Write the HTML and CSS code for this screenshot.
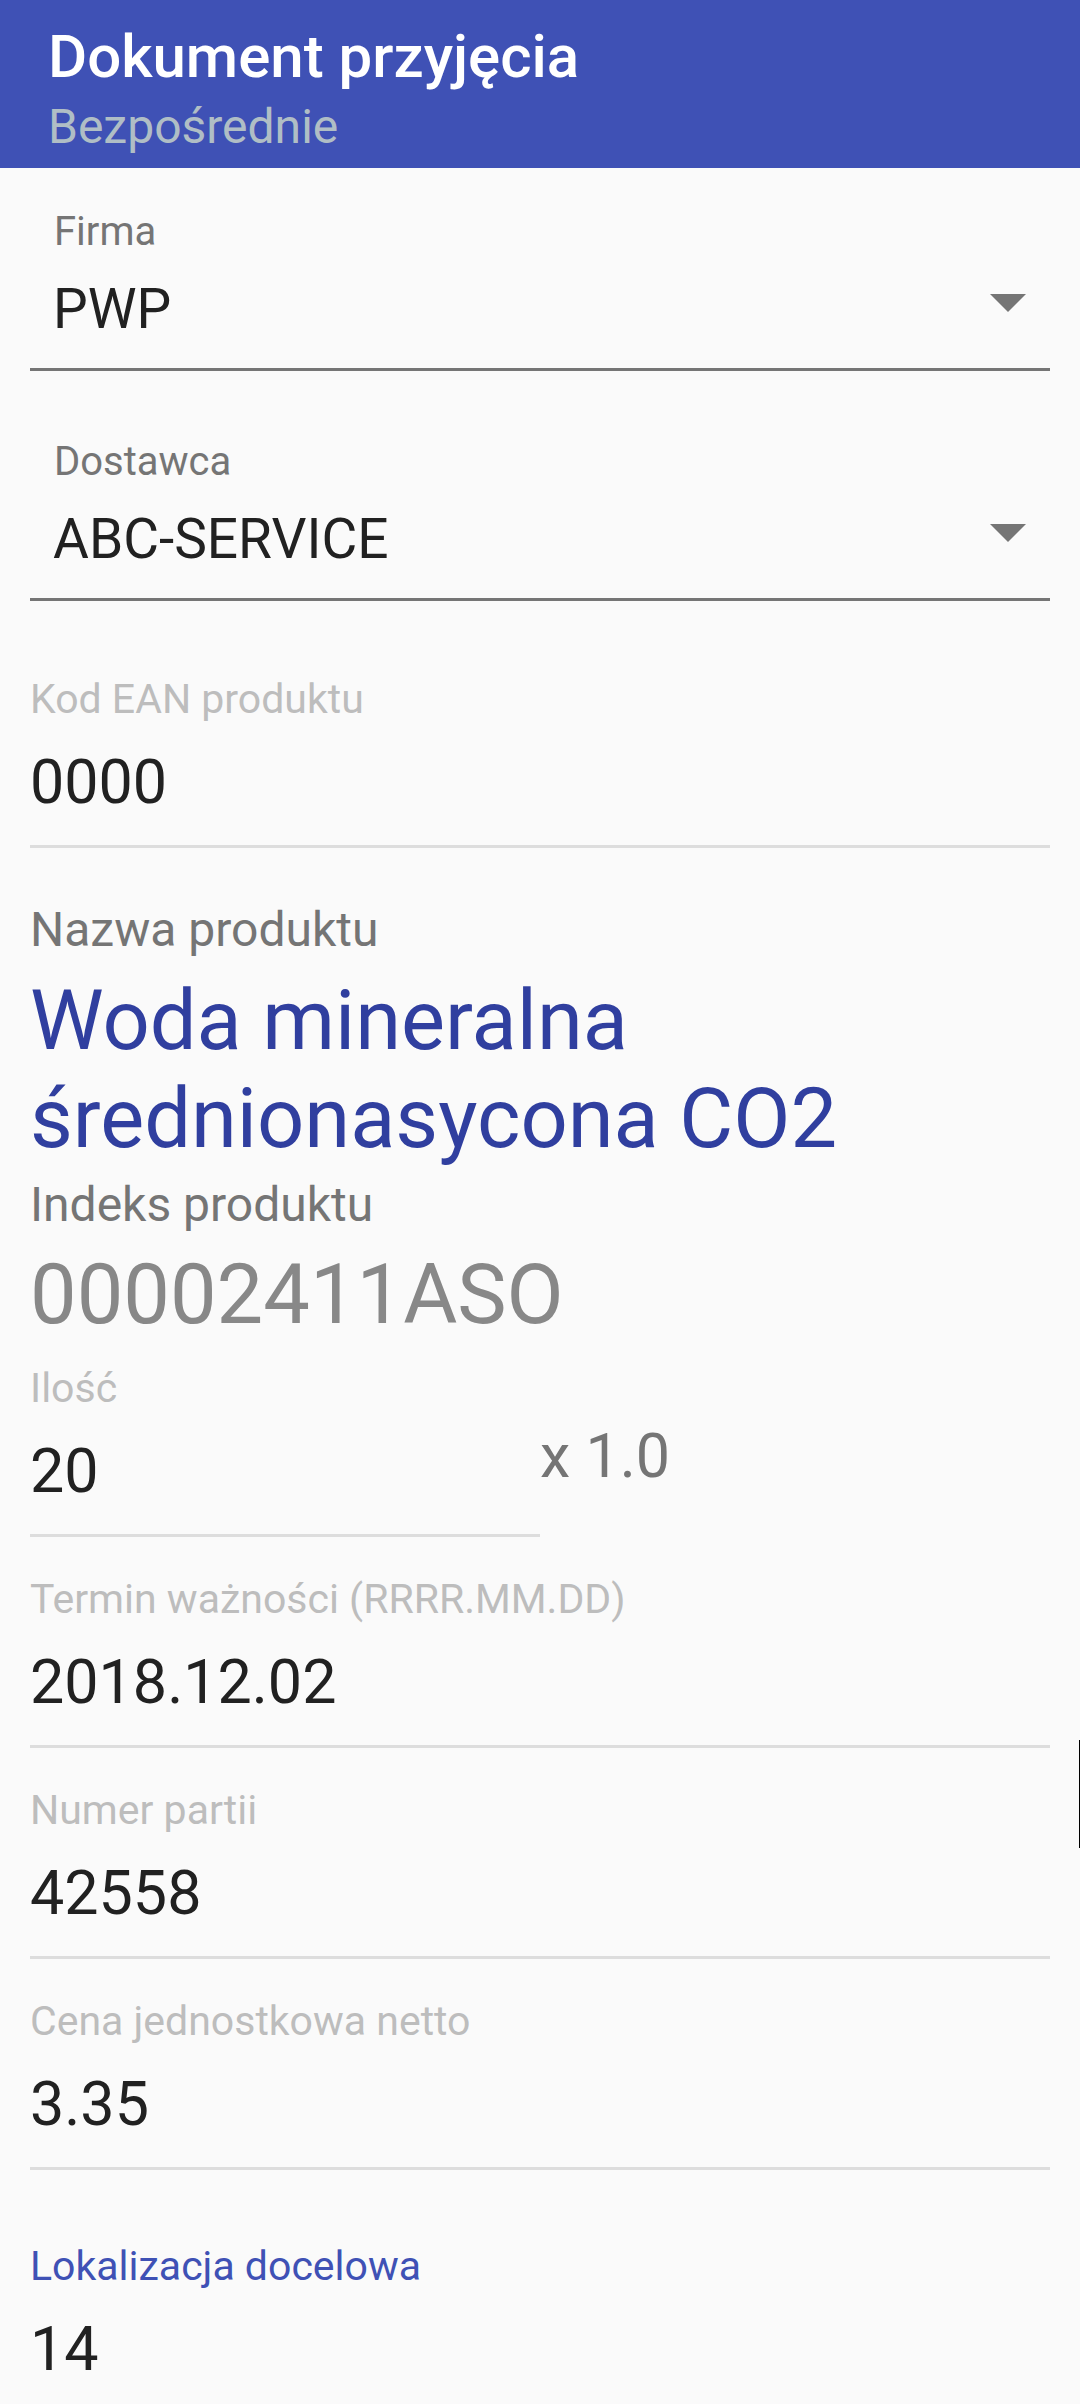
FILE: index.html
```html
<!DOCTYPE html>
<html lang="pl">
<head>
<meta charset="utf-8">
<title>Dokument przyjęcia</title>
<link rel="stylesheet" href="styles.css">
</head>
<body>
<div class="screen">
  <header class="toolbar">
    <div class="toolbar-title">Dokument przyjęcia</div>
    <div class="toolbar-subtitle">Bezpośrednie</div>
  </header>
  <main class="form">
    <section class="spinner">
      <div class="spinner-label">Firma</div>
      <div class="spinner-row">
        <span class="spinner-value">PWP</span>
        <svg class="spinner-arrow" width="36" height="18" viewBox="0 0 36 18"><path d="M0 0H36L18 18Z" fill="#757575"/></svg>
      </div>
      <div class="spinner-line"></div>
    </section>
    <section class="spinner">
      <div class="spinner-label">Dostawca</div>
      <div class="spinner-row">
        <span class="spinner-value">ABC-SERVICE</span>
        <svg class="spinner-arrow" width="36" height="18" viewBox="0 0 36 18"><path d="M0 0H36L18 18Z" fill="#757575"/></svg>
      </div>
      <div class="spinner-line"></div>
    </section>

    <section class="field field-ean">
      <div class="field-label">Kod EAN produktu</div>
      <div class="field-value">0000</div>
      <div class="field-line"></div>
    </section>

    <section class="product">
      <div class="info-label">Nazwa produktu</div>
      <div class="product-name">Woda mineralna średnionasycona CO2</div>
      <div class="info-label info-label-index">Indeks produktu</div>
      <div class="product-index">00002411ASO</div>
    </section>

    <section class="qty-row">
      <div class="field field-qty">
        <div class="field-label">Ilość</div>
        <div class="field-value">20</div>
        <div class="field-line"></div>
      </div>
      <div class="qty-mult">x 1.0</div>
    </section>

    <section class="field">
      <div class="field-label">Termin ważności (RRRR.MM.DD)</div>
      <div class="field-value">2018.12.02</div>
      <div class="field-line"></div>
    </section>

    <section class="field">
      <div class="field-label">Numer partii</div>
      <div class="field-value">42558</div>
      <div class="field-line"></div>
    </section>

    <section class="field">
      <div class="field-label">Cena jednostkowa netto</div>
      <div class="field-value">3.35</div>
      <div class="field-line"></div>
    </section>

    <section class="field field-focused">
      <div class="field-label">Lokalizacja docelowa</div>
      <div class="field-value">14</div>
      <div class="field-line"></div>
    </section>
  </main>
  <div class="scroll-indicator"></div>
</div>
</body>
</html>
```

FILE: styles.css
```css
html, body {
  margin: 0;
  padding: 0;
  height: 2404px;
  overflow: hidden;
  background: #fafafa;
}

.screen {
  position: relative;
  width: 1080px;
  height: 2404px;
  overflow: hidden;
  font-family: Roboto, "Noto Sans", "Liberation Sans", sans-serif;
  background: #fafafa;
}

.toolbar {
  box-sizing: border-box;
  height: 168px;
  padding: 22px 0 0 48px;
  background: #3f51b5;
}

.toolbar-title {
  font-size: 60px;
  line-height: 70px;
  font-weight: 500;
  color: #ffffff;
}

.toolbar-subtitle {
  margin-top: 7px;
  font-size: 48px;
  line-height: 56px;
  color: #b0bec5;
}

.form {
  padding: 0 30px;
}

/* Spinners */
.spinner {
  padding-top: 39px;
  margin-bottom: 27px;
}

.spinner-label {
  padding-left: 24px;
  font-size: 40px;
  line-height: 50px;
  color: #757575;
}

.spinner-row {
  display: flex;
  align-items: flex-start;
  justify-content: space-between;
  margin-top: 20px;
  height: 64px;
}

.spinner-value {
  padding-left: 23px;
  font-size: 55px;
  line-height: 64px;
  color: #212121;
}

.spinner-arrow {
  display: block;
  margin-top: 17px;
  margin-right: 24px;
}

.spinner-line {
  margin-top: 27px;
  height: 3px;
  background: #757575;
}

/* Edit fields */
.field {
  padding-top: 40px;
}

.field-ean {
  padding-top: 49px;
}

.field-label {
  font-size: 41px;
  line-height: 44px;
  color: #bdbdbd;
}

.field-value {
  margin-top: 26px;
  font-size: 61px;
  line-height: 70px;
  color: #212121;
}

.field-line {
  margin-top: 28px;
  height: 3px;
  background: #dddddd;
}

.field-focused {
  padding-top: 74px;
}

.field-focused .field-label {
  color: #3f51b5;
}

/* Product info */
.product {
  padding-top: 54px;
}

.info-label {
  font-size: 48px;
  line-height: 56px;
  color: #757575;
}

.product-name {
  margin-top: 14px;
  width: 920px;
  font-size: 83px;
  line-height: 98px;
  color: #303f9f;
}

.info-label-index {
  margin-top: 9px;
}

.product-index {
  margin-top: 14px;
  font-size: 83px;
  line-height: 96px;
  color: #888888;
}

/* Quantity */
.qty-row {
  display: flex;
  align-items: flex-start;
}

.field-qty {
  width: 510px;
  padding-top: 23px;
}

.qty-mult {
  margin-top: 78px;
  font-size: 61px;
  line-height: 70px;
  color: #757575;
}

.scroll-indicator {
  position: absolute;
  right: 0;
  top: 1740px;
  width: 1px;
  height: 108px;
  background: #000000;
}
```
